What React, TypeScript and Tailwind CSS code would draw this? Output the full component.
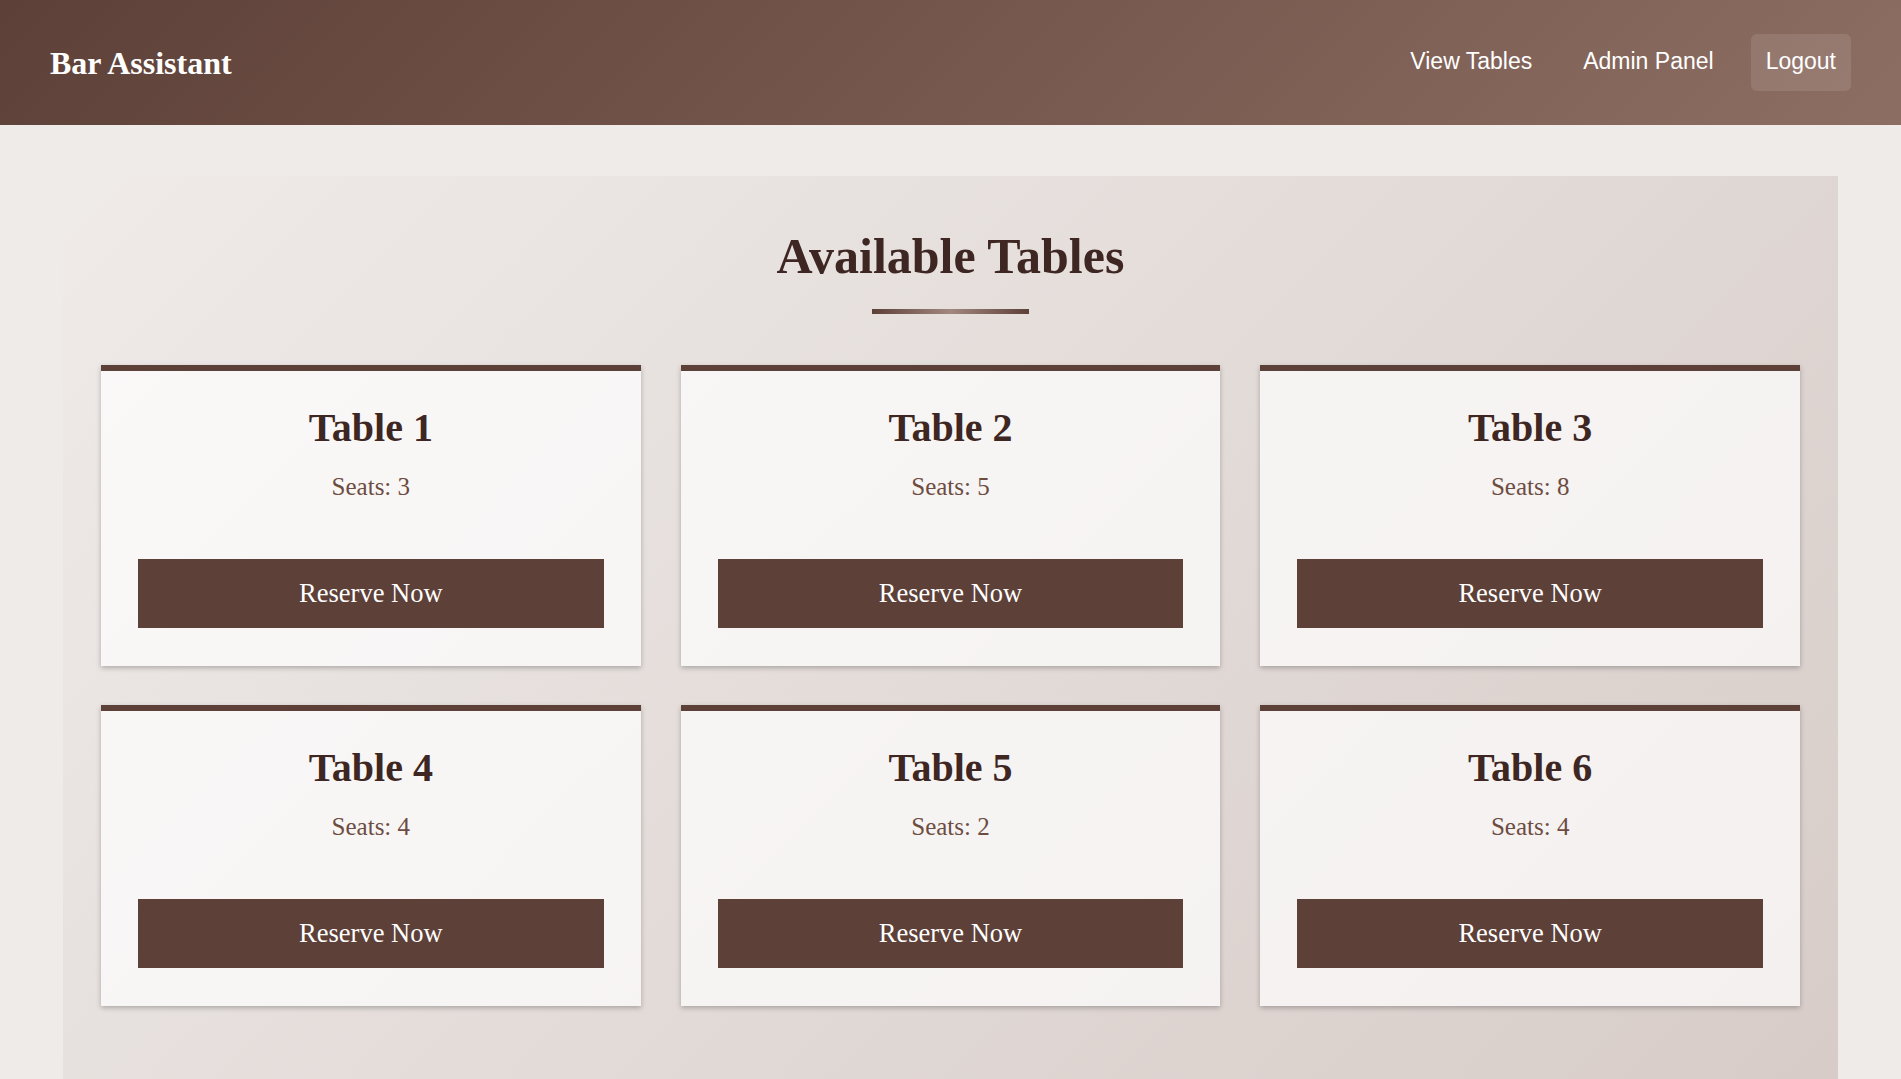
import React from "react";

const tables = [
  { id: 1, seats: 3 },
  { id: 2, seats: 5 },
  { id: 3, seats: 8 },
  { id: 4, seats: 4 },
  { id: 5, seats: 2 },
  { id: 6, seats: 4 },
];

const serif = "font-['Liberation_Serif','Times_New_Roman',serif]";

export default function App() {
  return (
    <div className="min-h-screen bg-[#efebe9]">
      <header className="flex h-[125px] items-center justify-between bg-[linear-gradient(135deg,#5d4037,#8d6e63)] pl-[50px] pr-[50px]">
        <div className={`${serif} text-[32px] font-bold text-white`}>Bar Assistant</div>
        <nav className="flex items-center gap-[23px] font-['Liberation_Sans',Arial,sans-serif] text-[23px] text-white">
          <a className="rounded-md px-[14px] pb-[16px] pt-[14px] leading-[27px]">View Tables</a>
          <a className="rounded-md px-[14px] pb-[16px] pt-[14px] leading-[27px]">Admin Panel</a>
          <a className="rounded-md bg-white/10 px-[15px] pb-[16px] pt-[14px] leading-[27px]">Logout</a>
        </nav>
      </header>

      <main className="mx-auto mt-[51px] w-[1775px] bg-[linear-gradient(135deg,#efebe9,#d7ccc8)] px-[38px] pb-[76px] pt-[52px]">
        <h2 className={`${serif} text-center text-[50px] font-bold leading-[56px] text-[#3e2723]`}>
          Available Tables
        </h2>
        <div className="mx-auto mt-[25px] h-[5px] w-[157px] bg-[linear-gradient(90deg,#5d4037,#a1887f,#5d4037)]" />

        <div className="mt-[51px] grid grid-cols-3 gap-x-10 gap-y-[39px]">
          {tables.map((t) => (
            <div
              key={t.id}
              className="flex flex-col border-t-[6px] border-[#5d4037] bg-white/70 px-[37px] pb-[38px] pt-[34px] text-center shadow-[0_2px_5px_rgba(0,0,0,0.25)]"
            >
              <h3 className={`${serif} text-[40px] font-bold leading-[46px] text-[#3e2723]`}>Table {t.id}</h3>
              <p className={`${serif} mt-[21px] text-[25px] leading-[29px] text-[#6d4c41]`}>Seats: {t.seats}</p>
              <button
                className={`${serif} mt-[58px] h-[69px] w-full bg-[#5d4037] text-[26.5px] text-white`}
              >
                Reserve Now
              </button>
            </div>
          ))}
        </div>
      </main>
    </div>
  );
}
